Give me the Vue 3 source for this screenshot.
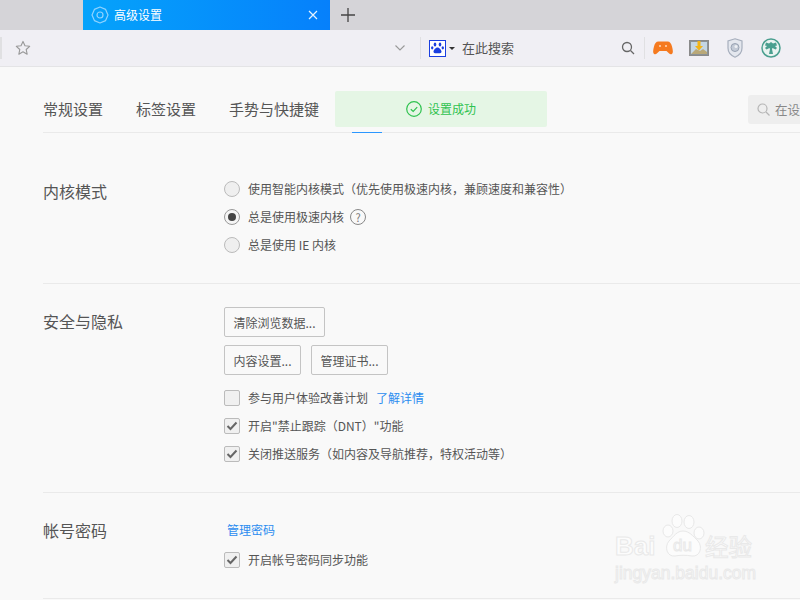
<script setup>
const tabs = ['常规设置', '标签设置', '手势与快捷键']
const radios = [
  { text: '使用智能内核模式（优先使用极速内核，兼顾速度和兼容性）', on: false },
  { text: '总是使用极速内核', on: true, help: true },
  { text: '总是使用 IE 内核', on: false },
]
const privacy = [
  { text: '参与用户体验改善计划', on: false, link: '了解详情' },
  { text: '开启"禁止跟踪（DNT）"功能', on: true },
  { text: '关闭推送服务（如内容及导航推荐，特权活动等）', on: true },
]
</script>

<template>
  <div class="browser">
    <div class="tabbar">
      <div class="tab">
        <svg class="tab-icon" width="18" height="18" viewBox="0 0 18 18" fill="none" stroke="#8fd3ff" stroke-width="1.2">
          <path d="M9 1l5.600 2.400L17 9l-2.400 5.600L9 17l-5.600-2.400L1 9l2.400-5.600z" stroke-linejoin="round" />
          <circle cx="9" cy="9" r="3" />
        </svg>
        <span class="tab-title">高级设置</span>
        <svg width="10" height="10" viewBox="0 0 10 10" stroke="#e4f3ff" stroke-width="1.2">
          <path d="M1 1l8 8M9 1l-8 8" />
        </svg>
      </div>
      <svg class="new-tab" width="14" height="14" viewBox="0 0 14 14" stroke="#444" stroke-width="1.3">
        <path d="M7 0v14M0 7h14" />
      </svg>
    </div>

    <div class="toolbar">
      <div class="sep first"></div>
      <svg class="star" width="16" height="16" viewBox="0 0 17 17" fill="none" stroke="#999" stroke-width="1.2">
        <path d="M8.500 1.500l2.100 4.600 5 .6-3.700 3.400 1 5-4.400-2.500-4.400 2.500 1-5L1.400 6.700l5-.6z" stroke-linejoin="round" />
      </svg>
      <div class="address"></div>
      <svg width="10" height="6" viewBox="0 0 10 6" fill="none" stroke="#999" stroke-width="1.1">
        <path d="M.5.5 5 5 9.500.5" />
      </svg>
      <div class="sep search-sep"></div>
      <svg class="baidu" width="17" height="17" viewBox="0 0 17 17">
        <rect x=".5" y=".5" width="16" height="16" fill="#fff" stroke="#1a3fe0" />
        <ellipse cx="6" cy="4.500" rx="1.300" ry="1.900" fill="#1a3fe0" />
        <ellipse cx="11" cy="4.500" rx="1.300" ry="1.900" fill="#1a3fe0" />
        <ellipse cx="3.200" cy="7.800" rx="1.200" ry="1.600" fill="#1a3fe0" />
        <ellipse cx="13.800" cy="7.800" rx="1.200" ry="1.600" fill="#1a3fe0" />
        <path d="M8.500 7.500c-2 0-4 2.600-4 4.300 0 1.700 2.400 1.400 4 1.400s4 .3 4-1.400c0-1.700-2-4.300-4-4.300z" fill="#1a3fe0" />
      </svg>
      <span class="caret"></span>
      <span class="search-text">在此搜索</span>
      <svg class="search-glass" width="14" height="14" viewBox="0 0 14 14" fill="none" stroke="#666" stroke-width="1.300">
        <circle cx="6" cy="6" r="4.500" />
        <path d="M9.500 9.500 13 13" />
      </svg>
      <div class="sep icons-sep"></div>
      <svg class="ext game" width="20" height="14" viewBox="0 0 20 14">
        <path d="M5.500.5h9c2.500 0 3.800 2 4.500 5 .6 2.500 1.200 4.500.6 6.500-.5 1.500-2.300 1.800-3.400.6L13.500 10h-7l-2.700 2.600C2.700 13.800.9 13.500.4 12c-.6-2 0-4 .6-6.500.7-3 2-5 4.500-5z" fill="#f57a1f" />
        <circle cx="7" cy="5" r="1" fill="#ffd9b8" />
        <circle cx="13" cy="5" r="1" fill="#ffd9b8" />
      </svg>
      <svg class="ext photo" width="20" height="16" viewBox="0 0 20 16">
        <rect x=".5" y=".5" width="19" height="15" fill="#8b9296" stroke="#8a8a8a" />
        <rect x="2" y="2" width="16" height="12" fill="#c4d6e4" />
        <path d="M2 14l5-5 4 2 3-2 4 3v2z" fill="#b9a878" />
        <path d="M8.500 1h3v5h2.500L10 10.500 6 6h2.500z" fill="#f2b417" />
      </svg>
      <svg class="ext shield" width="16" height="20" viewBox="0 0 16 20">
        <path d="M8 .8 15 3v7c0 4.500-3 7.500-7 9.200C4 17.500 1 14.500 1 10V3z" fill="#e4e7ee" stroke="#a7afbd" stroke-width="1.200" />
        <circle cx="8" cy="9.500" r="4" fill="#c3cad6" stroke="#98a2b2" />
        <circle cx="9" cy="8.500" r="1.500" fill="#eef0f4" />
      </svg>
      <svg class="ext palm" width="20" height="20" viewBox="0 0 20 20">
        <circle cx="10" cy="10" r="9" fill="#e9f3f0" stroke="#4a9f8f" stroke-width="1.500" />
        <path d="M10 4l2 1.500 3-1 1 3-2 .5 2 2-1.500 1.500-3-1.500-.5 1 1 5H8l1-5-.5-1-3 1.500L4 10l2-2-2-.5 1-3 3 1z" fill="#4a9f8f" />
      </svg>
    </div>

    <div class="page">
      <nav class="nav">
        <a v-for="t in tabs" :key="t" class="nav-item">{{ t }}</a>
        <span class="nav-underline"></span>
        <div class="find">
          <svg width="13" height="13" viewBox="0 0 13 13" fill="none" stroke="#b5b5b5" stroke-width="1.200">
            <circle cx="5.500" cy="5.500" r="4.500" />
            <path d="M9 9l3.500 3.500" />
          </svg>
          <span>在设</span>
        </div>
      </nav>

      <div class="toast">
        <svg width="16" height="16" viewBox="0 0 16 16" fill="none" stroke="#2fc24f" stroke-width="1.200">
          <circle cx="8" cy="8" r="7.300" />
          <path d="M4.800 8.200 7.200 10.500l4-4.300" />
        </svg>
        <span class="txt">设置成功</span>
      </div>

      <section class="section first-section">
        <h3 class="label">内核模式</h3>
        <div class="body">
          <div v-for="r in radios" :key="r.text" class="row">
            <span class="radio" :class="{ on: r.on }"></span>
            <span class="txt">{{ r.text }}</span>
            <span v-if="r.help" class="help">?</span>
          </div>
        </div>
      </section>

      <section class="section">
        <h3 class="label">安全与隐私</h3>
        <div class="body">
          <div class="btn-row"><button class="btn wide">清除浏览数据...</button></div>
          <div class="btn-row">
            <button class="btn">内容设置...</button>
            <button class="btn">管理证书...</button>
          </div>
          <div class="checks">
            <div v-for="c in privacy" :key="c.text" class="row">
              <span class="check">
                <svg v-if="c.on" width="12" height="10" viewBox="0 0 12 10" fill="none" stroke="#666" stroke-width="2">
                  <path d="M1.500 5 4.500 8l6-6.500" />
                </svg>
              </span>
              <span class="txt">{{ c.text }}</span>
              <a v-if="c.link" class="link txt">{{ c.link }}</a>
            </div>
          </div>
        </div>
      </section>

      <section class="section">
        <h3 class="label">帐号密码</h3>
        <div class="body">
          <div class="row"><a class="link manage txt">管理密码</a></div>
          <div class="row sync">
            <span class="check">
              <svg width="12" height="10" viewBox="0 0 12 10" fill="none" stroke="#666" stroke-width="2">
                <path d="M1.500 5 4.500 8l6-6.500" />
              </svg>
            </span>
            <span class="txt">开启帐号密码同步功能</span>
          </div>
        </div>
      </section>

      <div class="watermark">
        <div class="wm-top">
          <span class="wm-word">Bai</span>
          <svg class="wm-paw" width="43" height="46" viewBox="0 0 43 46" fill="#fcfcfc" stroke="#e8e8e8">
            <ellipse cx="15" cy="7" rx="5" ry="6.500" />
            <ellipse cx="27" cy="8" rx="5" ry="6.500" />
            <ellipse cx="6" cy="17" rx="5" ry="6" />
            <ellipse cx="37" cy="19" rx="5" ry="6" />
            <path d="M21 17c-6 0-9 5-14 10-5 6-2 16 6 15 5-1 11-1 17 0 8 1 11-9 6-15-5-5-9-10-15-10z" />
          </svg>
          <span class="wm-du">du</span>
          <span class="wm-cn">经验</span>
        </div>
        <div class="wm-url">jingyan.baidu.com</div>
      </div>
    </div>
  </div>
</template>

<style>
html, body { margin: 0; overflow: hidden; }
</style>

<style scoped>
.browser {
  width: 800px;
  height: 600px;
  overflow: hidden;
  background: #f9f9f9;
  color: #555;
  font-family: "Noto Sans CJK SC", "Liberation Sans", sans-serif;
  font-size: 12px;
}
.tabbar {
  height: 30px;
  box-sizing: border-box;
  padding-left: 83px;
  display: flex;
  align-items: center;
  background: #d5d4d8;
}
.tab {
  width: 247px;
  height: 30px;
  box-sizing: border-box;
  padding: 0 12px 0 8px;
  display: flex;
  align-items: center;
  background: linear-gradient(90deg, #05a3fb, #0680fb);
  color: #fff;
}
.tab-title { margin-left: 5px; flex: 1; margin-bottom: 1px; }
.new-tab { margin-left: 11px; }
.toolbar {
  height: 37px;
  box-sizing: border-box;
  display: flex;
  align-items: center;
  background: #f0eff4;
  border-bottom: 1px solid #e4e4e6;
}
.sep { width: 1px; height: 22px; background: #e0e0e2; }
.sep.first { width: 2px; }
.star { margin-left: 13px; }
.address { flex: 1; }
.search-sep { margin-left: 15px; }
.baidu { margin-left: 8px; }
.caret {
  margin-left: 3px;
  border: 3px solid transparent;
  border-top: 3px solid #333;
  border-bottom: 0;
}
.search-text { margin-left: 7px; font-size: 13px; width: 159px; color: #555; margin-bottom: 1px; }
.search-glass { margin-right: 9px; }
.icons-sep { margin-right: 8px; }
.ext { flex: none; }
.photo { margin-left: 16px; }
.shield { margin-left: 18px; }
.palm { margin-left: 18px; margin-right: 19px; }
.page { position: relative; }
.nav {
  position: relative;
  height: 66px;
  box-sizing: border-box;
  margin-left: 43px;
  padding-top: 32px;
  display: flex;
  gap: 33px;
  border-bottom: 1px solid #eaeaea;
  font-size: 15px;
  line-height: 20px;
  color: #555;
}
.nav-underline {
  position: absolute;
  left: 309px;
  bottom: -1px;
  width: 30px;
  height: 1px;
  background: #2b97ff;
}
.find {
  position: absolute;
  left: 705px;
  top: 28px;
  width: 52px;
  height: 29px;
  padding-left: 9px;
  box-sizing: border-box;
  display: flex;
  align-items: center;
  gap: 5px;
  border-radius: 3px 0 0 3px;
  background: #eeeeee;
  font-size: 12.500px;
  color: #888;
  white-space: nowrap;
}
.find svg { flex: none; }
.toast {
  position: absolute;
  left: 335px;
  top: 24px;
  width: 212px;
  height: 36px;
  display: flex;
  align-items: center;
  justify-content: center;
  gap: 6px;
  box-sizing: border-box;
  border-radius: 2px;
  background: #e5f6e5;
  color: #2fc24f;
}
.section {
  display: grid;
  grid-template-columns: 181px 1fr;
  margin-left: 43px;
  padding: 23px 0 24px;
  border-bottom: 1px solid #eaeaea;
}
.first-section { padding-top: 42px; }
.label {
  margin: 0;
  font-size: 16px;
  font-weight: 400;
  line-height: 28px;
  color: #555;
}
.first-section .label { margin-top: 2px; }
.row {
  height: 28px;
  display: flex;
  align-items: center;
  white-space: nowrap;
  color: #555;
}
.txt { margin-bottom: 2px; }
.radio {
  width: 14px;
  height: 14px;
  margin-right: 8px;
  flex: none;
  border: 1px solid #bbb;
  border-radius: 50%;
  background: #efefef;
  position: relative;
}
.radio.on { background: #f5f5f5; border-color: #999; }
.radio.on::after {
  content: "";
  position: absolute;
  left: 3px;
  top: 3px;
  width: 8px;
  height: 8px;
  border-radius: 50%;
  background: #444;
}
.help {
  width: 14px;
  height: 14px;
  margin-left: 6px;
  border: 1px solid #888;
  border-radius: 50%;
  text-align: center;
  line-height: 14px;
  font-size: 11px;
  color: #777;
}
.btn-row { display: flex; gap: 10px; margin-bottom: 8px; }
.btn {
  width: 77px;
  height: 30px;
  padding: 0;
  box-sizing: border-box;
  border: 1px solid #c4c4c4;
  border-radius: 2px;
  background: #f9f9f9;
  color: #555;
  font: inherit;
}
.btn.wide { width: 101px; }
.checks { margin-top: 9px; }
.check {
  width: 14px;
  height: 14px;
  margin-right: 8px;
  flex: none;
  display: flex;
  align-items: center;
  justify-content: center;
  border: 1px solid #bbb;
  border-radius: 2px;
  background: #f0f0f0;
}
.link { margin-left: 8px; color: #2b8cf0; }
.manage { margin-left: 3px; }
.sync { margin-top: 2px; }
.watermark {
  position: absolute;
  left: 615px;
  top: 447px;
  width: 160px;
  pointer-events: none;
}
.wm-top { position: relative; height: 46px; display: flex; align-items: flex-end; }
.wm-word, .wm-cn, .wm-du, .wm-url {
  font-family: "Liberation Sans", sans-serif;
  color: #fcfcfc;
  -webkit-text-stroke: 1px #e9e9e9;
}
.wm-word { font-size: 26px; line-height: 28px; font-weight: 700; width: 47px; }
.wm-du {
  position: absolute;
  left: 58px;
  bottom: 5px;
  font-size: 17px;
  line-height: 18px;
}
.wm-cn {
  margin-left: 0;
  font-family: "Noto Sans CJK SC", sans-serif;
  font-size: 23.500px;
  line-height: 28px;
  white-space: nowrap;
}
.wm-url {
  margin-top: 3px;
  font-size: 17.500px;
  line-height: 20px;
  white-space: nowrap;
}
</style>
